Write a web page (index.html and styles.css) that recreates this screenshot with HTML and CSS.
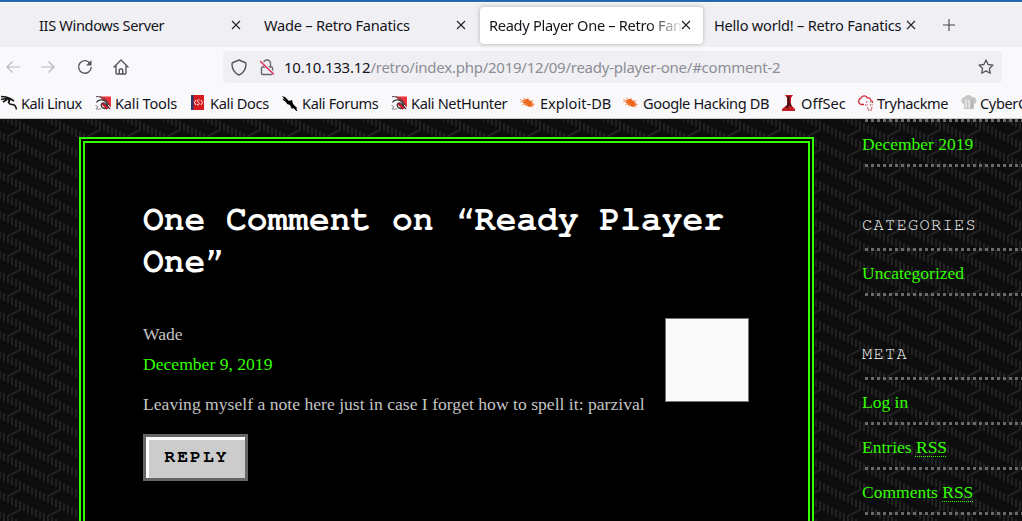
FILE: index.html
```html
<!DOCTYPE html>
<html lang="en">
<head>
<meta charset="utf-8">
<title>Ready Player One – Retro Fanatics</title>
<link rel="stylesheet" href="styles.css">
</head>
<body>
<svg class="defs" width="0" height="0">
  <symbol id="close" viewBox="0 0 10 10"><path d="M1 1l8 8M9 1L1 9" fill="none" stroke="#222" stroke-width="1.1"/></symbol>
  <symbol id="kali-red" viewBox="0 0 16 14"><path d="M4 .5h12v11z" fill="#f5333f"/><path d="M1 .7c6-.8 12 3.300 13.500 9" fill="none" stroke="#444" stroke-width="1"/><path d="M1.500 6.500C4 2.500 10 3 12 7.500c1 2.500 0 5-2.500 5-3.500 0-4.500-5-1.500-5.500 2-.3 4 2.500 7 6" fill="#fff" stroke="#333" stroke-width="1.300"/><path d="M.5 9.500l2.500 1-2 2.500h5" fill="none" stroke="#888"/><path d="M7.500 7.500l5 5.500" stroke="#c91529" stroke-width="2.400"/></symbol>
  <symbol id="bug" viewBox="0 0 15 13"><path d="M2.500 5l2.500-1.500 3 0 4 3 1 3-3.500 1-5-2.500z" fill="#ee6419" stroke="#ee6419"/><path d="M0 6l5-1M2 9l4-2M5 10.500l3-3M3.500 1.500l2.500 3M7.500 1.500l1.500 3M11 4.500l2.500 .5M11 7.500l4 1M11 9l1.500 2.500M0 3.500l4 1.500" stroke="#f19a66" stroke-width=".9"/></symbol>
</svg>
<header class="browser">
  <nav class="tabs">
    <div class="tab tab-first"><span>IIS Windows Server</span><svg class="x"><use href="#close"/></svg></div>
    <div class="tab tab-wade"><span>Wade – Retro Fanatics</span><svg class="x"><use href="#close"/></svg></div>
    <div class="tab tab-active"><span>Ready Player One – Retro Fan</span><svg class="x"><use href="#close"/></svg></div>
    <div class="tab tab-hello"><span>Hello world! – Retro Fanatics</span><svg class="x"><use href="#close"/></svg></div>
    <svg class="plus" viewBox="0 0 12 12"><path d="M6 0v12M0 6h12" stroke="#444" stroke-width="1.1"/></svg>
  </nav>
  <div class="toolbar">
    <div class="buttons">
      <svg width="14" height="12" viewBox="0 0 14 12"><path d="M14 6H1M6.500 .5L1 6l5.500 5.500" fill="none" stroke="#b9b9bd" stroke-width="1.2"/></svg>
      <svg width="14" height="12" viewBox="0 0 14 12"><path d="M0 6h13M7.500 .5L13 6l-5.500 5.500" fill="none" stroke="#b9b9bd" stroke-width="1.2"/></svg>
      <svg class="reload" width="16" height="16" viewBox="0 0 16 16"><path d="M13.200 4.500A6.300 6.300 0 1 0 14.200 8" fill="none" stroke="#55555e" stroke-width="1.4"/><path d="M14.500 1v5.500H9z" fill="#55555e"/></svg>
      <svg class="home" width="16" height="16" viewBox="0 0 16 16"><path d="M1 8l7-7 7 7M3 6.500V14q0 1 1 1h8q1 0 1-1V6.500M6.300 15v-4q0-1 1-1h1.400q1 0 1 1v4" fill="none" stroke="#55555e" stroke-width="1.4" stroke-linecap="round" stroke-linejoin="round"/></svg>
    </div>
    <div class="address">
      <svg width="16" height="17" viewBox="0 0 16 17"><path d="M8 1l6 2.500q1 .4 1 1.500c0 5-2.500 9-7 11-4.500-2-7-6-7-11q0-1.100 1-1.500z" fill="none" stroke="#55555e" stroke-width="1.400"/></svg>
      <svg class="lock" width="14" height="17" viewBox="0 0 14 17"><path d="M3.500 8V4.500a3.500 3.500 0 0 1 7 0V8M2.500 8h9q1 0 1 1v5.500q0 1-1 1h-9q-1 0-1-1V9q0-1 1-1" fill="none" stroke="#66666c" stroke-width="1.4"/><path d="M0 1.500l14 13.500" stroke="#f0f0f4" stroke-width="3"/><path d="M0 2l14 13.500" stroke="#e22850" stroke-width="1.3"/></svg>
      <span class="url"><b>10.10.133.12</b>/retro/index.php/2019/12/09/ready-player-one/#comment-2</span>
      <svg class="star" width="16" height="16" viewBox="0 0 16 16"><path d="M8 1l2.100 4.500 4.900.6-3.600 3.300.9 4.900L8 11.900l-4.300 2.400.9-4.900L1 6.100l4.900-.6z" fill="none" stroke="#55555e" stroke-width="1.300" stroke-linejoin="round"/></svg>
    </div>
  </div>
  <nav class="bookmarks">
    <a class="b1"><svg width="16" height="16" viewBox="0 0 16 16"><path d="M0 1.500l5 .5 4 1.500 4 2.500M0 4.500l5-1 4 1M2 7l4-2.500M9 4.500C6 7 8 9.500 11 9.500c3 0 4 2 4.500 5M9 4l-1 3" fill="none" stroke="#111" stroke-width="1.500"/></svg>Kali Linux</a>
    <a class="b2"><svg width="16" height="14"><use href="#kali-red"/></svg>Kali Tools</a>
    <a class="b3"><svg width="13" height="15" viewBox="0 0 13 15"><path d="M0 0h13v15H0z" fill="#d71920"/><path d="M0 0h2.500v15H0z" fill="#273a6b"/><path d="M5 5L3.500 7.500 5 10M10 5l1.500 2.500L10 10M8.500 5c-3-1-2 2-1 2.500 2 1 0 3-1.500 2" fill="none" stroke="#fff"/></svg>Kali Docs</a>
    <a class="b4"><svg width="16" height="16" viewBox="0 0 16 16"><path d="M0 1l3 1 4 4 3-1 1 4 4 4-1 2-3-2-1 1-2-4-3-1-1-3z" fill="#000"/><path d="M1 4l5 4M11 11l4 5" stroke="#000" stroke-width="1.2"/></svg>Kali Forums</a>
    <a class="b5"><svg width="16" height="14"><use href="#kali-red"/></svg>Kali NetHunter</a>
    <a class="b6"><svg width="15" height="13"><use href="#bug"/></svg>Exploit-DB</a>
    <a class="b7"><svg width="15" height="13"><use href="#bug"/></svg>Google Hacking DB</a>
    <a class="b8"><svg width="14" height="16" viewBox="0 0 14 16"><path d="M3 0h8L9 3v7l4 4v2H0v-2l5-4V3z" fill="#bf1d23"/><path d="M6.500 1v8l-2 4M7 8l2 3" fill="none" stroke="#431013" stroke-width="2"/></svg>OffSec</a>
    <a class="b9"><svg width="17" height="16" viewBox="0 0 17 16"><path d="M7 9.500H4a3.300 3.300 0 0 1 0-6.300C5 .2 9 .2 10.500 3c2-.5 3 .5 3.200 2 2 .6 2 2 2 3" fill="none" stroke="#cf3038" stroke-width="1.300"/><path d="M9 7h2M13 7h2M8 10h3M13 10h3M10 13h2M14 13h2M11 15h4" stroke="#bf6266" stroke-width="1.500" stroke-dasharray="1 .6"/></svg>Tryhackme</a>
    <a class="b10"><svg width="16" height="15" viewBox="0 0 16 15"><path d="M3 9C-1 8 0 2 4 2c2-3 6-2 7 0 5-1 6 6 2 7v5H3z" fill="#c6c6c6"/><path d="M5 4v9M8 5v8" stroke="#e8e8e8" stroke-width="1.500"/><path d="M11 4v9" stroke="#a5a5a5"/></svg>CyberC</a>
  </nav>
</header>
<div class="site">
  <svg class="backdrop" width="100%" height="100%">
    <defs>
      <path id="run" d="M0 11v8M4 13v8M8 15v8M12 17v8M16 19v8M20 21v9L8 36v3M24 23v8M28 25v8M32 27v8M36 29v8M40 31v8" fill="none" stroke="#222" stroke-width="2"/>
      <pattern id="weave" width="40" height="20" y="1" patternUnits="userSpaceOnUse">
        <use href="#run" y="-20"/><use href="#run"/><use href="#run" y="-40"/>
      </pattern>
    </defs>
    <rect width="100%" height="100%" fill="url(#weave)"/>
  </svg>
  <main class="article">
    <h2>One Comment on “Ready Player One”</h2>
    <article class="comment">
      <div class="comment-text">
        <div class="author">Wade</div>
        <a class="date">December 9, 2019</a>
        <p>Leaving myself a note here just in case I forget how to spell it: parzival</p>
        <button>REPLY</button>
      </div>
      <div class="avatar"></div>
    </article>
  </main>
  <aside class="sidebar">
    <ul><li><a>December 2019</a></li></ul>
    <h3>CATEGORIES</h3>
    <ul><li><a>Uncategorized</a></li></ul>
    <h3>META</h3>
    <ul><li><a>Log in</a></li><li><a>Entries <abbr>RSS</abbr></a></li><li><a>Comments <abbr>RSS</abbr></a></li></ul>
  </aside>
</div>
</body>
</html>
```
FILE: styles.css
```css
* { box-sizing: border-box; }
body { margin: 0; width: 1022px; height: 521px; overflow: hidden; background: #0d0d0d; font: 17.6px/30px "Liberation Serif", serif; }
svg { flex: none; }
.defs { position: absolute; }
.browser { height: 119px; border-top: 2px solid #2467ac; border-bottom: 1px solid #ccc; background: #f9f9fb; font: 15px/20px "Noto Sans", sans-serif; color: #15141a; white-space: nowrap; overflow: hidden; }
.tabs { height: 45px; display: flex; align-items: center; background: #f0f0f4; padding: 0 0 0 30px; border-top: 1px solid #fafafc; }
.tab { display: flex; align-items: center; justify-content: space-between; height: 37px; padding: 0 14px 0 9px; font-size: 14.6px; }
.tab span { letter-spacing: -.23px; }
.x { width: 10px; height: 10px; }
.tab-first { width: 225px; }
.tab-first span { letter-spacing: -.36px; }
.tab-wade { width: 225px; }
.tab-active { width: 223px; padding-right: 12px; background: #fff; border-radius: 4px; box-shadow: 0 0 4px #8889; }
.tab-active span { width: 192px; letter-spacing: -.3px; mask-image: linear-gradient(90deg, #000 83%, transparent 102%); }
.tab-hello { width: 222px; padding: 0 9px 0 11px; }
.plus { width: 12px; height: 12px; margin-left: 18px; }
.toolbar { height: 40px; display: flex; align-items: center; padding: 0 20px 0 6px; }
.buttons { width: 217px; display: flex; align-items: center; gap: 21px; }
.reload { margin-left: 1px; }
.home { margin-left: -1px; }
.address { flex: 1; height: 32px; display: flex; align-items: center; background: #f0f0f4; border-radius: 4px; padding: 0 8px; }
.lock { margin-left: 13px; }
.url { margin-left: 10px; color: #8d8d94; letter-spacing: -.24px; }
.url b { font-weight: normal; color: #15141a; }
.star { margin-left: auto; }
.bookmarks { display: flex; height: 31px; padding-left: 1px; }
.bookmarks a { display: flex; align-items: center; gap: 4px; flex: none; font-size: 14.6px; letter-spacing: -.38px; }
.bookmarks .b1 { width: 94px; letter-spacing: -.5px; }
.bookmarks .b2 { width: 96px; letter-spacing: -.2px; }
.bookmarks .b3 { width: 91px; gap: 6px; letter-spacing: -.35px; }
.bookmarks .b4 { width: 109px; }
.bookmarks .b5 { width: 129px; }
.bookmarks .b6 { width: 103px; gap: 5px; letter-spacing: 0; }
.bookmarks .b7 { width: 159px; gap: 5px; }
.bookmarks .b8 { width: 75px; gap: 5px; letter-spacing: 0; }
.bookmarks .b9 { width: 104px; gap: 3px; letter-spacing: -.4px; }
.bookmarks .b10 { gap: 3px; }
.site { display: flex; height: 402px; position: relative; overflow: hidden; }
.backdrop { position: absolute; inset: 0; }
.article { position: relative; width: 735px; height: 450px; margin: 18px 0 0 79px; flex: none; border: 6px double #3f0; background: #000; padding: 56px 59px 0 58px; }
h2 { margin: 0; width: 605px; font: bold 34.6px/42px "Nimbus Mono PS", FreeMono, "Liberation Mono", monospace; color: #fff; }
.comment { display: flex; justify-content: space-between; padding-top: 35px; color: #c4c4c4; }
.comment-text { width: 515px; padding-top: 1px; }
.author, .date { display: block; }
.author { height: 30px; }
.date { color: #3f0; }
.comment p { margin: 10px 0 15px; letter-spacing: .01px; }
button { display: block; width: 105px; height: 47px; padding: 0 0 2px 2px; border: 3px solid #666; background: #ccc; box-shadow: inset 3px 3px #fff; color: #000; font: bold 18px/24px "Nimbus Mono PS", FreeMono, "Liberation Mono", monospace; letter-spacing: 2px; }
.avatar { width: 84px; height: 84px; background: #f9f9f9; border: 1px solid #777; }
.sidebar { position: relative; width: 161px; margin-left: 48px; flex: none; font-size: 17.5px; }
.sidebar ul { list-style: none; width: 297px; margin: 0 0 0 3px; padding: 0; color: #3f0; border-top: 3px dotted #6a6a6a; }
.sidebar li { height: 45px; line-height: 44px; border-bottom: 3px dotted #6a6a6a; }
.sidebar li a { margin-left: -3px; }
h3 { margin: 0; font: 17px/20px "Nimbus Mono PS", FreeMono, "Liberation Mono", monospace; letter-spacing: 1.3px; color: #fff; padding: 48px 0 13px; }
abbr { text-decoration: underline dotted 1px; text-underline-offset: 3px; }
```
